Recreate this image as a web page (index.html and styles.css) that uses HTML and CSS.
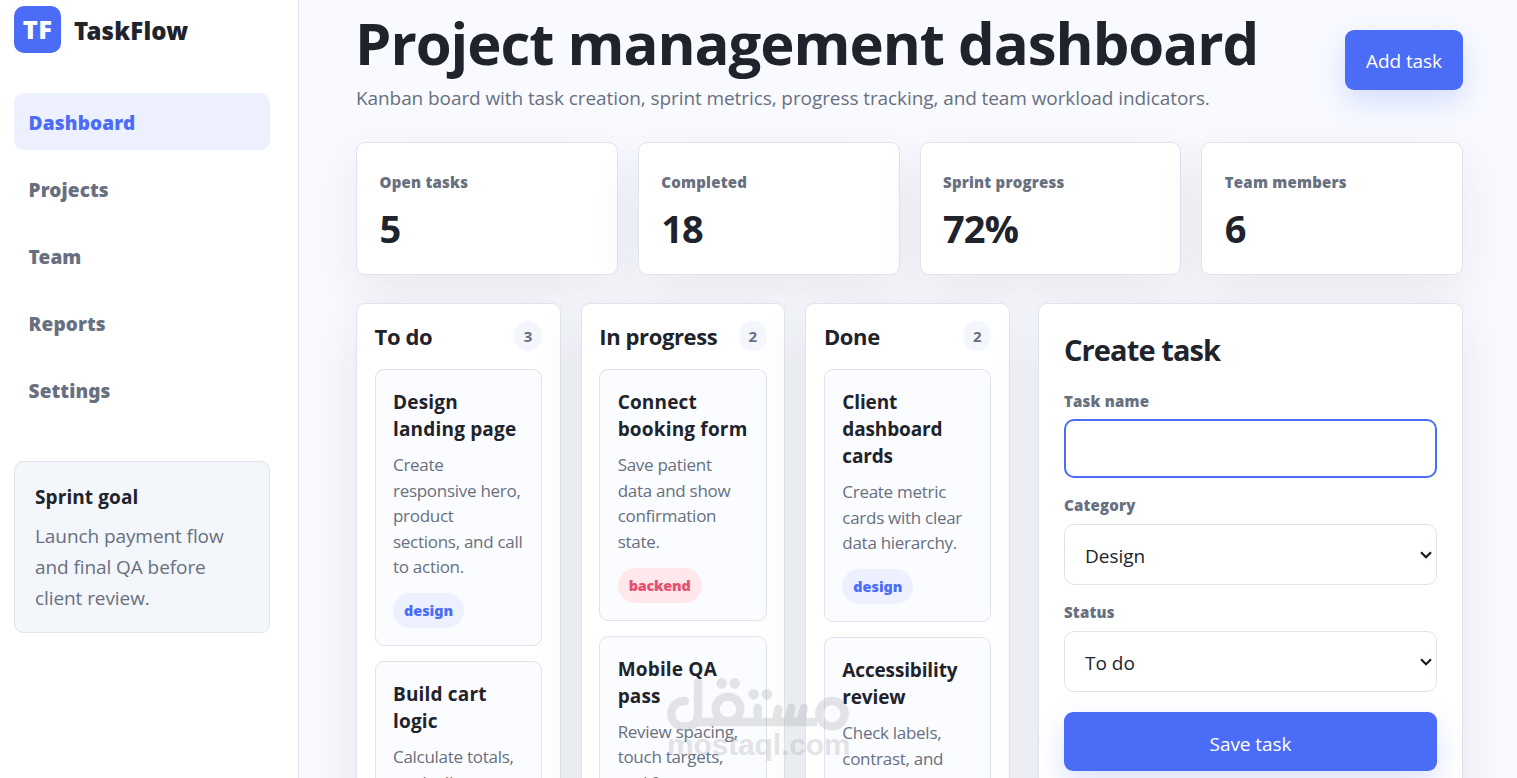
FILE: index.html
```html
<!DOCTYPE html>
<html lang="en">
<head>
<meta charset="utf-8">
<title>TaskFlow</title>
<link rel="stylesheet" href="styles.css">
</head>
<body>
<div class="app">
  <aside class="sidebar">
    <div class="brand"><span class="logo">TF</span><span class="brand-name">TaskFlow</span></div>
    <nav class="nav">
      <a class="nav-item active">Dashboard</a>
      <a class="nav-item">Projects</a>
      <a class="nav-item">Team</a>
      <a class="nav-item">Reports</a>
      <a class="nav-item">Settings</a>
    </nav>
    <section class="goal">
      <strong>Sprint goal</strong>
      <p>Launch payment flow<br>and final QA before<br>client review.</p>
    </section>
  </aside>
  <main class="main">
    <header class="topbar">
      <div>
        <h1>Project management dashboard</h1>
        <p class="subtitle">Kanban board with task creation, sprint metrics, progress tracking, and team workload indicators.</p>
      </div>
      <button class="btn add">Add task</button>
    </header>
    <section class="metrics">
      <article class="metric"><span>Open tasks</span><strong>5</strong></article>
      <article class="metric"><span>Completed</span><strong>18</strong></article>
      <article class="metric"><span>Sprint progress</span><strong>72%</strong></article>
      <article class="metric"><span>Team members</span><strong>6</strong></article>
    </section>
    <section class="workspace">
      <div class="board">
        <section class="column">
          <div class="column-head"><h2>To do</h2><span class="count">3</span></div>
          <article class="card">
            <h3>Design<br>landing page</h3>
            <p>Create<br>responsive hero,<br>product<br>sections, and call<br>to action.</p>
            <span class="tag">design</span>
          </article>
          <article class="card">
            <h3>Build cart<br>logic</h3>
            <p>Calculate totals,<br>apply discount</p>
          </article>
        </section>
        <section class="column">
          <div class="column-head"><h2>In progress</h2><span class="count">2</span></div>
          <article class="card">
            <h3>Connect<br>booking form</h3>
            <p>Save patient<br>data and show<br>confirmation<br>state.</p>
            <span class="tag backend">backend</span>
          </article>
          <article class="card">
            <h3>Mobile QA<br>pass</h3>
            <p>Review spacing,<br>touch targets,<br>and form</p>
          </article>
        </section>
        <section class="column">
          <div class="column-head"><h2>Done</h2><span class="count">2</span></div>
          <article class="card">
            <h3 class="tight">Client<br>dashboard<br>cards</h3>
            <p>Create metric<br>cards with clear<br>data hierarchy.</p>
            <span class="tag">design</span>
          </article>
          <article class="card">
            <h3 class="tight">Accessibility<br>review</h3>
            <p>Check labels,<br>contrast, and<br>keyboard focus</p>
          </article>
        </section>
      </div>
      <form class="panel">
        <h2>Create task</h2>
        <label for="name">Task name</label>
        <input id="name" class="field focused" type="text">
        <label for="category">Category</label>
        <div class="select">
          <select id="category" class="field"><option>Design</option></select>
          <svg class="chevron" width="12" height="8" viewBox="0 0 12 8"><path d="M1 1.2 6 6.2 11 1.2"/></svg>
        </div>
        <label for="status">Status</label>
        <div class="select">
          <select id="status" class="field"><option>To do</option></select>
          <svg class="chevron" width="12" height="8" viewBox="0 0 12 8"><path d="M1 1.2 6 6.2 11 1.2"/></svg>
        </div>
        <button type="button" class="btn save">Save task</button>
      </form>
    </section>
  </main>
  <div class="watermark">
    <svg width="184" height="54" viewBox="0 0 552 162" fill="none" stroke="currentColor" stroke-width="25">
      <path stroke-linecap="round" d="M54 69C28 69 13 87 13 108c0 22 16 37 40 37 28 0 40-12 40-38V13"/>
      <path d="M90 132H450"/>
      <circle cx="183" cy="93" r="37"/>
      <path stroke-linecap="round" d="M272 125V90M328 125l6-32M365 125l8-36M403 125l8-36"/>
      <circle cx="495" cy="107" r="38"/>
      <g fill="currentColor" stroke="none"><circle cx="164" cy="16" r="16"/><circle cx="203" cy="16" r="16"/><circle cx="260" cy="49" r="16"/><circle cx="300" cy="49" r="16"/></g>
    </svg>
    <span>mostaql.com</span>
  </div>
</div>
</body>
</html>
```
FILE: styles.css
```css
* { box-sizing: border-box; }
body {
  margin: 0;
  height: 778px;
  overflow: hidden;
  background: #f8faff;
  color: #20232b;
  font-family: "Open Sans", "Noto Sans", sans-serif;
}
h1, h2, h3, p { margin: 0; }
.app {
  position: relative;
  display: grid;
  grid-template-columns: 299px 1fr;
  height: 778px;
  overflow: hidden;
  white-space: nowrap;
}

/* sidebar */
.sidebar {
  padding: 6px 28px 0 14px;
  background: #fff;
  border-right: 1px solid #e0e3eb;
}
.brand { display: flex; align-items: center; gap: 13px; height: 47px; }
.logo {
  display: grid;
  place-items: center;
  width: 47px;
  height: 47px;
  border-radius: 10px;
  background: #4b6cf7;
  color: #fff;
  font: 800 25.5px/47px "Open Sans", sans-serif;
  letter-spacing: .4px;
}
.brand-name {
  padding-top: 2px;
  font: 900 24px/34px "Noto Sans", sans-serif;
  letter-spacing: .2px;
}
.nav { display: grid; gap: 10px; margin-top: 40px; }
.nav-item {
  height: 57px;
  padding: 2px 14px 0 14.6px;
  border-radius: 10px;
  color: #68707f;
  font: 900 19px/57px "Noto Sans", sans-serif;
  letter-spacing: .1px;
}
.nav-item.active { background: #edf1ff; color: #4b6cf7; letter-spacing: .18px; }
.goal {
  height: 172px;
  margin-top: 43px;
  padding: 20px;
  border: 1px solid #e0e3eb;
  border-radius: 9px;
  background: #f3f6fb;
}
.goal strong { display: block; font-size: 19px; line-height: 30px; letter-spacing: .09px; }
.goal p {
  margin-top: 9px;
  color: #68707f;
  font-size: 19px;
  line-height: 31px;
  letter-spacing: -.08px;
}

/* main area */
.main { padding: 13px 54px 0 57px; min-width: 0; }
.topbar { display: flex; justify-content: space-between; align-items: flex-start; height: 129px; }
h1 { font-size: 58px; line-height: 60px; font-weight: 700; letter-spacing: -1.02px; margin-left: -1px; }
.subtitle { margin-top: 10px; color: #68707f; font-size: 19px; line-height: 30px; letter-spacing: -.085px; }
.btn {
  border: 0;
  border-radius: 9px;
  background: #4b6cf7;
  color: #fff;
  font: 400 19px/59px "Open Sans", sans-serif;
  letter-spacing: -.07px;
  box-shadow: 0 12px 29px rgba(75, 108, 247, .2);
}
.add { width: 118px; height: 60px; margin-top: 17px; padding: 2px 0 0; }
.metrics { display: grid; grid-template-columns: repeat(4, 1fr); gap: 20px; }
.metric, .column, .panel {
  border: 1px solid #e0e3eb;
  border-radius: 9px;
  background: #fff;
  box-shadow: 0 17px 50px rgba(33, 37, 41, .08);
}
.column, .panel { box-shadow: 0 17px 50px rgba(33, 37, 41, .09); }
.metric { height: 133px; padding: 27px 22.5px 0; }
.metric span {
  display: block;
  margin-bottom: 11px;
  color: #68707f;
  font-size: 15px;
  line-height: 24px;
  font-weight: 800;
  letter-spacing: .22px;
}
.metric strong { display: block; font-size: 38px; line-height: 46px; letter-spacing: -.9px; }
.workspace { display: grid; grid-template-columns: 654px 425px; gap: 28px; margin-top: 28px; }
.board { display: grid; grid-template-columns: repeat(3, 1fr); gap: 20px; }
.column { height: 620px; padding: 17px 17.6px; }
.column-head { display: flex; justify-content: space-between; align-items: center; height: 30px; margin-bottom: 18px; }
.column-head h2 { font-size: 22px; line-height: 30px; letter-spacing: -.38px; padding-bottom: 1px; }
.count {
  width: 28px;
  height: 30px;
  border-radius: 15px;
  background: #f3f6fb;
  color: #68707f;
  font-size: 15px;
  line-height: 30px;
  font-weight: 700;
  text-align: center;
}
.card {
  margin-bottom: 15px;
  padding: 19px 17.4px 17px;
  border: 1px solid #e0e3eb;
  border-radius: 9px;
  background: #fbfcff;
}
.card h3 { font-size: 19px; line-height: 27px; letter-spacing: .18px; }
.card h3.tight { letter-spacing: -.15px; }
.card p { margin: 9px 0 13.5px; color: #68707f; font-size: 17px; line-height: 25.5px; letter-spacing: -.28px; }
.tag {
  display: block;
  width: max-content;
  height: 35px;
  padding: 0 11px;
  border-radius: 18px;
  background: #edf1ff;
  color: #4b6cf7;
  font: 900 14.4px/35px "Noto Sans", sans-serif;
}
.tag.backend { background: #ffe7ec; color: #e6506f; letter-spacing: -.2px; }

/* form */
.panel { display: flex; flex-direction: column; height: 620px; padding: 25px; }
.panel h2 { font-size: 29px; line-height: 42px; letter-spacing: -.9px; margin-bottom: 19px; }
.panel label { color: #68707f; font-size: 15px; line-height: 23px; font-weight: 800; letter-spacing: .2px; }
.field {
  width: 100%;
  height: 61px;
  margin: 0;
  padding: 2px 20px 0;
  border: 1px solid #e0e3eb;
  border-radius: 10px;
  outline: 0;
  appearance: none;
  background: #fff;
  color: #20232b;
  font: 400 19px "Open Sans", sans-serif;
}
.field.focused { flex: none; height: 59px; margin: 6px 0 16px; border: 2px solid #4b6cf7; }
.select { display: grid; align-items: center; margin: 7px 0 16px; }
.select > * { grid-area: 1 / 1; }
.chevron {
  justify-self: end;
  margin-right: 5px;
  fill: none;
  stroke: #17191f;
  stroke-width: 2.2;
}
.save { flex: none; height: 59px; margin-top: 4px; padding: 3px 0 0; }

/* overlay mark */
.watermark {
  position: absolute;
  left: 667px;
  top: 678px;
  width: 184px;
  color: #969c9f;
  opacity: .25;
  pointer-events: none;
}
.watermark svg { display: block; }
.watermark span {
  display: block;
  font: 700 30px/34px "Liberation Sans", sans-serif;
  letter-spacing: -.15px;
  margin-top: -4px;
}
```
